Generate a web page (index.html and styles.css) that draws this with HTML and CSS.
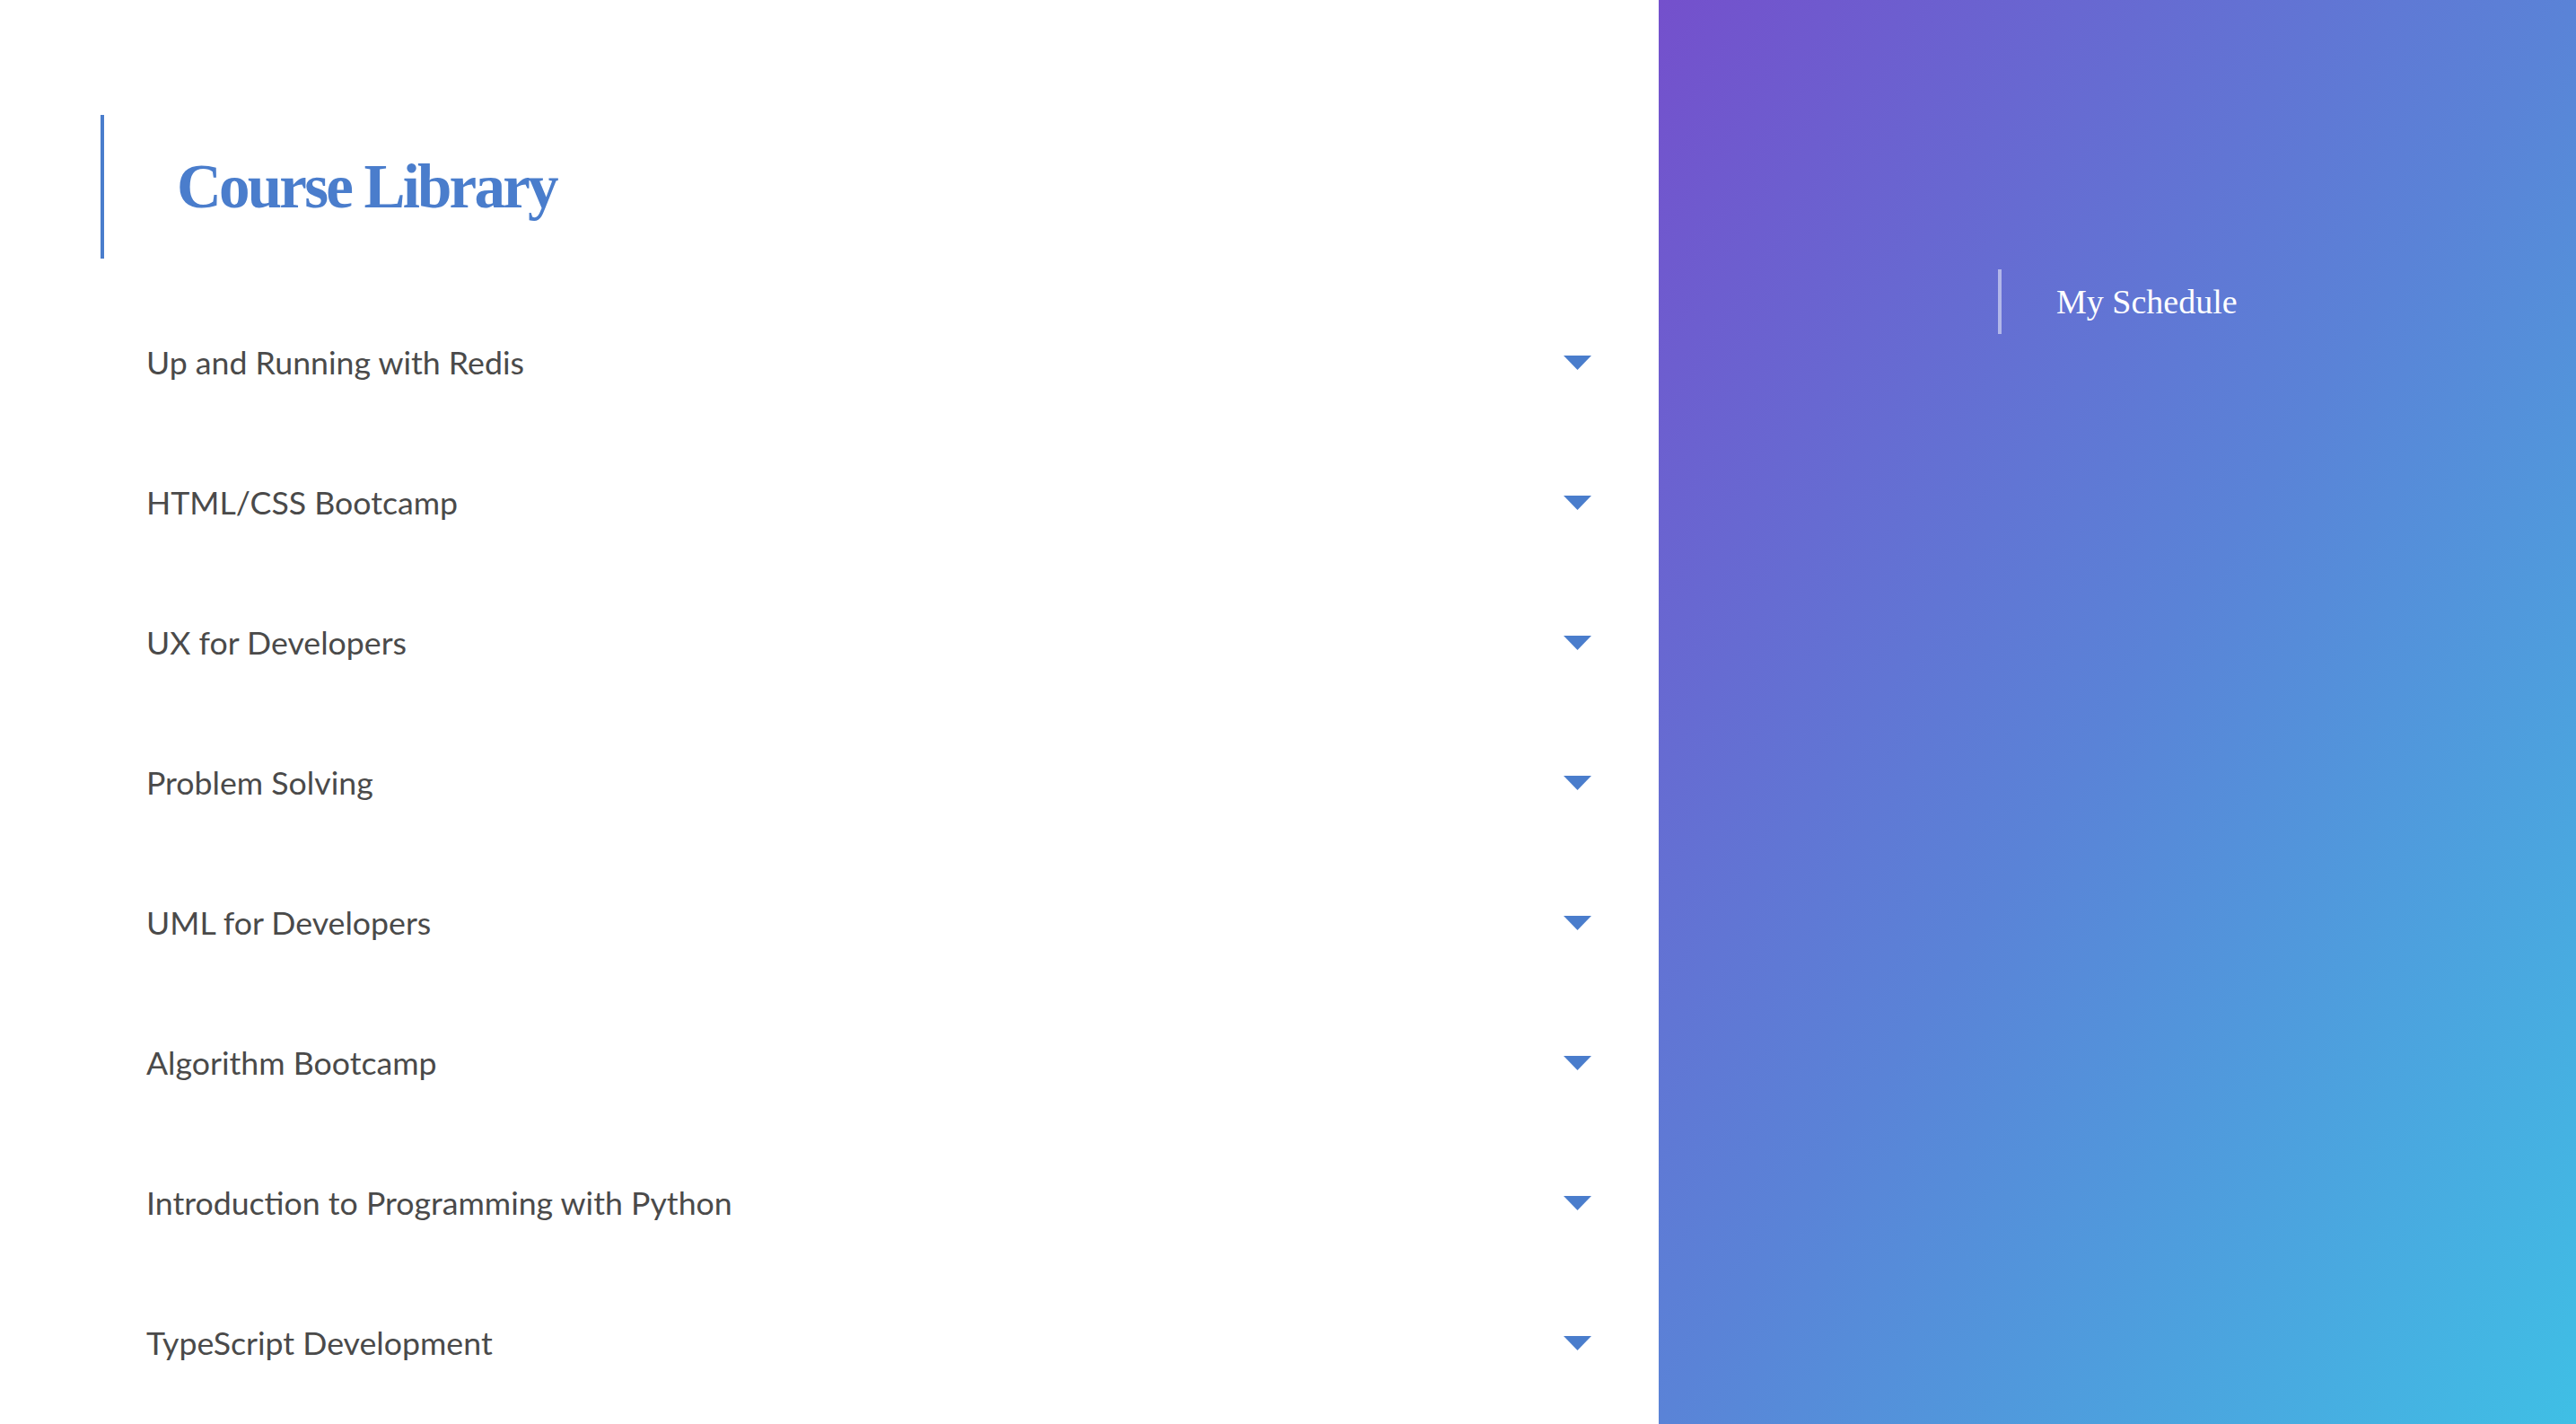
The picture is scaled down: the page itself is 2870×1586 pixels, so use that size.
FILE: index.html
```html
<!DOCTYPE html>
<html lang="en">
<head>
<meta charset="utf-8">
<title>Course Library</title>
<link rel="stylesheet" href="styles.css">
</head>
<body>
<div class="app">
  <main class="library">
    <header class="library-header">
      <h1 class="library-title">Course Library</h1>
    </header>
    <ul class="course-list">
      <li class="course"><span class="course-name">Up and Running with Redis</span><svg class="caret" width="31" height="16" viewBox="0 0 31 16"><polygon points="0,0 31,0 15.5,16"/></svg></li>
      <li class="course"><span class="course-name">HTML/CSS Bootcamp</span><svg class="caret" width="31" height="16" viewBox="0 0 31 16"><polygon points="0,0 31,0 15.5,16"/></svg></li>
      <li class="course"><span class="course-name">UX for Developers</span><svg class="caret" width="31" height="16" viewBox="0 0 31 16"><polygon points="0,0 31,0 15.5,16"/></svg></li>
      <li class="course"><span class="course-name">Problem Solving</span><svg class="caret" width="31" height="16" viewBox="0 0 31 16"><polygon points="0,0 31,0 15.5,16"/></svg></li>
      <li class="course"><span class="course-name">UML for Developers</span><svg class="caret" width="31" height="16" viewBox="0 0 31 16"><polygon points="0,0 31,0 15.5,16"/></svg></li>
      <li class="course"><span class="course-name">Algorithm Bootcamp</span><svg class="caret" width="31" height="16" viewBox="0 0 31 16"><polygon points="0,0 31,0 15.5,16"/></svg></li>
      <li class="course"><span class="course-name">Introduction to Programming with Python</span><svg class="caret" width="31" height="16" viewBox="0 0 31 16"><polygon points="0,0 31,0 15.5,16"/></svg></li>
      <li class="course"><span class="course-name">TypeScript Development</span><svg class="caret" width="31" height="16" viewBox="0 0 31 16"><polygon points="0,0 31,0 15.5,16"/></svg></li>
    </ul>
  </main>
  <aside class="schedule">
    <h2 class="schedule-title">My Schedule</h2>
  </aside>
</div>
</body>
</html>
```

FILE: styles.css
```css
* { box-sizing: border-box; }
html, body { margin: 0; padding: 0; }
body {
  background: #ffffff;
  font-family: "Lato", "Liberation Sans", sans-serif;
  overflow: hidden;
}
.app {
  display: flex;
  height: 1586px;
}
.library {
  width: 1848px;
  flex: 0 0 1848px;
  padding: 128px 75px 0 0;
}
.library-header {
  margin-left: 112px;
  height: 160px;
  border-left: 4px solid #4a7dcc;
  display: flex;
  align-items: center;
  padding-left: 81px;
}
.library-title {
  margin: 0;
  font-family: "Liberation Serif", "DejaVu Serif", serif;
  font-weight: 700;
  font-size: 69px;
  letter-spacing: -2.8px;
  color: #4a7dcc;
  line-height: 1;
}
.course-list {
  list-style: none;
  margin: 38px 0 0 0;
  padding: 0 0 0 163px;
}
.course {
  height: 156px;
  display: flex;
  align-items: center;
  justify-content: space-between;
}
.course-name {
  font-size: 35.7px;
  color: #4a4a4a;
  line-height: 1;
}
.caret {
  display: block;
  fill: #4a7dcc;
}
.schedule {
  flex: 1 1 auto;
  background: linear-gradient(to bottom right, #7450cc 0%, #5a83d7 50%, #3fbfe5 100%);
  padding: 300px 0 0 378px;
}
.schedule-title {
  margin: 0;
  height: 72px;
  border-left: 4px solid rgba(255, 255, 255, 0.5);
  display: flex;
  align-items: center;
  padding-left: 61px;
  font-family: "Liberation Serif", "DejaVu Serif", serif;
  font-weight: 400;
  font-size: 38px;
  color: #ffffff;
}
```
